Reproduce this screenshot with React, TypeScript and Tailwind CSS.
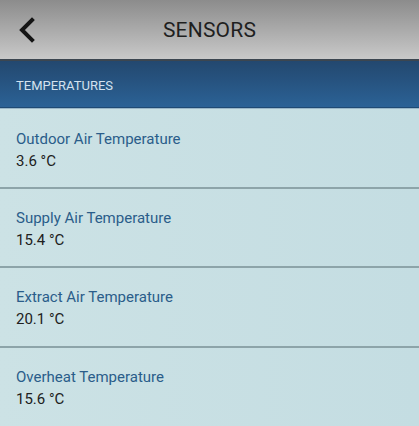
import React from "react";

const items = [
  { name: "Outdoor Air Temperature", value: "3.6 °C" },
  { name: "Supply Air Temperature", value: "15.4 °C" },
  { name: "Extract Air Temperature", value: "20.1 °C" },
  { name: "Overheat Temperature", value: "15.6 °C" },
];

export default function App() {
  return (
    <div className="w-[419px] h-[426px] overflow-hidden flex flex-col bg-gradient-to-r from-[#cce2e5] to-[#c4dde2]" style={{ fontFamily: "Roboto, 'Noto Sans', sans-serif" }}>
      <div className="h-[59px] shrink-0 relative flex items-center justify-center pt-[2px] bg-gradient-to-b from-[#8c8c8c] to-[#c9c9c9]">
        <svg className="absolute left-[17px] top-[17px]" width="20" height="26" viewBox="0 0 20 26">
          <path d="M15 3 L5 13 L15 23" fill="none" stroke="#141414" strokeWidth="4" strokeLinecap="square" />
        </svg>
        <span className="text-[21px] text-[#1f1f1f] tracking-[0.2px]">SENSORS</span>
      </div>
      <div className="h-[2px] shrink-0 bg-[#3c4650]" />
      <div className="h-[47px] shrink-0 flex items-center px-4 pt-[3px] bg-gradient-to-b from-[#23486f] to-[#2b6296] border-b border-[#1f4a74]">
        <span className="text-[13px] text-[#d4e2ef]">TEMPERATURES</span>
      </div>
      <div className="h-[1px] shrink-0 bg-[#9ab7c8]" />
      {items.map((it, i) => (
        <div key={it.name} className="flex flex-col shrink-0">
          {i > 0 && <div className="h-[2px] bg-[#8da4a9]" />}
          <div className={i === 0 ? "h-[78px] flex flex-col pl-4 pt-[20px]" : i === 1 ? "h-[77px] flex flex-col pl-4 pt-[19px]" : "h-[78px] flex flex-col pl-4 pt-[19px]"}>
            <span className="text-[15px] leading-[20px] text-[#2a5d8a]">{it.name}</span>
            <span className="text-[15px] leading-[20px] mt-[2px] text-[#202020]">{it.value}</span>
          </div>
        </div>
      ))}
    </div>
  );
}
